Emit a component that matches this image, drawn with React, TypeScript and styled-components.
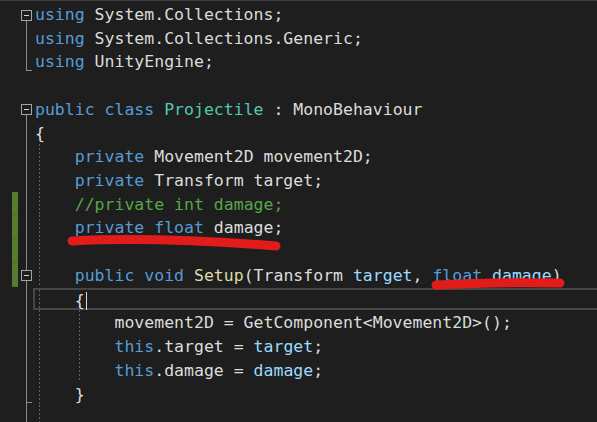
import styled, { createGlobalStyle } from 'styled-components'

const LINE = 23.73

const GlobalStyle = createGlobalStyle`
  html, body {
    margin: 0;
    padding: 0;
    background: #1e1e1e;
    overflow: hidden;
  }
`

const colors: Record<string, string> = {
  kw: '#569cd6',
  type: '#4ec9b0',
  plain: '#dcdcdc',
  comment: '#57a64a',
  param: '#9cdcfe',
  method: '#dcdcaa',
}

type Tok = [string, keyof typeof colors]
type Fold = 'none' | 'open' | 'openMid' | 'line' | 'end' | 'endMid'

interface Line {
  toks: Tok[]
  fold: Fold
  changed?: boolean
  guides?: number[]
  current?: boolean
}

const lines: Line[] = [
  { toks: [['using', 'kw'], [' System.Collections;', 'plain']], fold: 'open' },
  { toks: [['using', 'kw'], [' System.Collections.Generic;', 'plain']], fold: 'line' },
  { toks: [['using', 'kw'], [' UnityEngine;', 'plain']], fold: 'end' },
  { toks: [], fold: 'none' },
  {
    toks: [['public', 'kw'], [' ', 'plain'], ['class', 'kw'], [' ', 'plain'], ['Projectile', 'type'], [' : MonoBehaviour', 'plain']],
    fold: 'open',
  },
  { toks: [['{', 'plain']], fold: 'line' },
  { toks: [['    ', 'plain'], ['private', 'kw'], [' Movement2D movement2D;', 'plain']], fold: 'line', guides: [4] },
  { toks: [['    ', 'plain'], ['private', 'kw'], [' Transform target;', 'plain']], fold: 'line', guides: [4] },
  { toks: [['    ', 'plain'], ['//private int damage;', 'comment']], fold: 'line', guides: [4], changed: true },
  {
    toks: [['    ', 'plain'], ['private', 'kw'], [' ', 'plain'], ['float', 'kw'], [' damage;', 'plain']],
    fold: 'line', guides: [4], changed: true,
  },
  { toks: [], fold: 'line', guides: [4], changed: true },
  {
    toks: [
      ['    ', 'plain'], ['public', 'kw'], [' ', 'plain'], ['void', 'kw'], [' ', 'plain'], ['Setup', 'method'],
      ['(Transform ', 'plain'], ['target', 'param'], [', ', 'plain'], ['float', 'kw'], [' ', 'plain'],
      ['damage', 'param'], [')', 'plain'],
    ],
    fold: 'openMid', guides: [4], changed: true,
  },
  { toks: [['    {', 'plain']], fold: 'line', guides: [4], current: true },
  { toks: [['        movement2D = GetComponent<Movement2D>();', 'plain']], fold: 'line', guides: [4, 44] },
  {
    toks: [['        ', 'plain'], ['this', 'kw'], ['.target = ', 'plain'], ['target', 'param'], [';', 'plain']],
    fold: 'line', guides: [4, 44],
  },
  {
    toks: [['        ', 'plain'], ['this', 'kw'], ['.damage = ', 'plain'], ['damage', 'param'], [';', 'plain']],
    fold: 'line', guides: [4, 44],
  },
  { toks: [['    }', 'plain']], fold: 'endMid', guides: [4] },
  { toks: [], fold: 'line', guides: [4] },
]

const Editor = styled.div`
  position: relative;
  width: 597px;
  height: 422px;
  overflow: hidden;
  background: #1e1e1e;
  border-top: 1px solid #3c3c40;
  box-sizing: border-box;
  padding-top: 1px;
  display: flex;
  flex-direction: column;
`

const Row = styled.div`
  display: flex;
  height: ${LINE}px;
  flex-shrink: 0;
`

const Margin = styled.div`
  display: grid;
  grid-template-columns: 12px 6px 3px 11px 1fr;
  width: 35px;
  flex-shrink: 0;
  height: 100%;
`

const ChangeMark = styled.div<{ $on?: boolean }>`
  grid-column: 2;
  background: ${(p) => (p.$on ? '#587c2f' : 'transparent')};
  border-bottom: 1px solid ${(p) => (p.$on ? '#4d6b29' : 'transparent')};
`

const FoldCell = styled.div<{ $fold: Fold }>`
  grid-column: 4;
  position: relative;
  height: 100%;

  &::before {
    content: '';
    display: ${(p) => (p.$fold === 'none' ? 'none' : 'block')};
    position: absolute;
    left: 5px;
    width: 1px;
    background: #8a8a8a;
    top: ${(p) => (p.$fold === 'open' ? '18px' : '0')};
    bottom: ${(p) => (p.$fold === 'end' ? '2px' : '0')};
  }

  &::after {
    content: '';
    display: ${(p) => (p.$fold === 'end' || p.$fold === 'endMid' ? 'block' : 'none')};
    position: absolute;
    left: 5px;
    width: 6px;
    height: 1px;
    bottom: 2px;
    background: #8a8a8a;
  }
`

const FoldBox = styled.div`
  position: absolute;
  top: 7.5px;
  left: 0;
  width: 11px;
  height: 11px;
  box-sizing: border-box;
  border: 1px solid #a5a5a5;
  background: #1e1e1e;
  display: flex;
  align-items: center;
  justify-content: center;
  z-index: 1;

  &::after {
    content: '';
    width: 5px;
    height: 1px;
    background: #d4d4d4;
  }
`

const Code = styled.div<{ $current?: boolean }>`
  position: relative;
  flex: 1;
  height: 100%;
  box-sizing: border-box;
  font-family: 'DejaVu Sans Mono', 'Liberation Mono', monospace;
  font-size: 16.5px;
  line-height: ${LINE + 1.5}px;
  white-space: pre;
  color: #dcdcdc;
  margin-left: ${(p) => (p.$current ? '-2px' : '0')};
  border: ${(p) => (p.$current ? '2px solid #464646' : 'none')};
  border-right: none;
  ${(p) => (p.$current ? 'line-height: 21px; margin-top: 1px; height: 22.5px;' : '')}
`

const Guide = styled.span<{ $x: number }>`
  position: absolute;
  top: 0;
  bottom: 0;
  left: ${(p) => p.$x}px;
  width: 1px;
  background: repeating-linear-gradient(to bottom, #5e5e5e 0 2px, transparent 2px 4px);
`

const Tk = styled.span<{ $kind: string }>`
  position: relative;
  color: ${(p) => colors[p.$kind]};
`

const Caret = styled.span`
  display: inline-block;
  width: 1px;
  height: 18px;
  margin-left: 1px;
  vertical-align: -4px;
  background: #dcdcdc;
`

const Marks = styled.svg`
  position: absolute;
  left: 0;
  top: 0;
  pointer-events: none;
`

export default function App() {
  return (
    <>
      <GlobalStyle />
      <Editor>
        {lines.map((ln, i) => (
          <Row key={i}>
            <Margin>
              <ChangeMark $on={ln.changed} />
              <FoldCell $fold={ln.fold}>
                {(ln.fold === 'open' || ln.fold === 'openMid') && <FoldBox />}
              </FoldCell>
            </Margin>
            <Code $current={ln.current}>
              {(ln.guides || []).map((g) => (
                <Guide key={g} $x={g} />
              ))}
              {ln.toks.map(([t, k], j) => (
                <Tk key={j} $kind={k}>{t}</Tk>
              ))}
              {ln.current && <Caret />}
            </Code>
          </Row>
        ))}
        <Marks width="597" height="422" viewBox="0 0 597 422">
          <path
            d="M72 240 C 130 237, 200 239, 276 245"
            stroke="#e21b1b"
            strokeWidth="9"
            strokeLinecap="round"
            fill="none"
          />
          <path
            d="M436 284 C 480 282, 520 281, 560 282"
            stroke="#e21b1b"
            strokeWidth="9"
            strokeLinecap="round"
            fill="none"
          />
        </Marks>
      </Editor>
    </>
  )
}
